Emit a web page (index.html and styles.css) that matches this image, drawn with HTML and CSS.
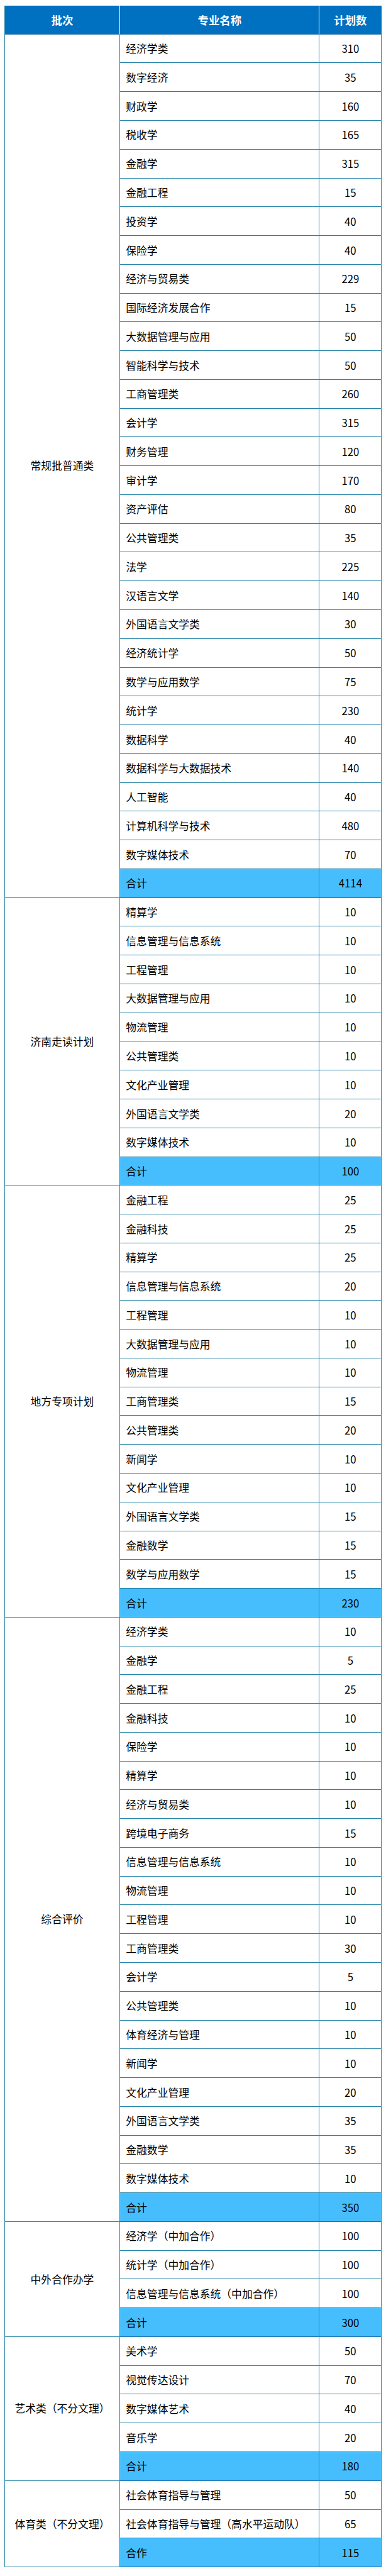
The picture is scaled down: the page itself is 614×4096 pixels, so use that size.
FILE: index.html
```html
<!DOCTYPE html>
<html lang="zh-CN">
<head>
<meta charset="utf-8">
<title>招生计划</title>
<link rel="stylesheet" href="styles.css">
</head>
<body>
<div class="plan">
  <div class="cell head">批次</div>
  <div class="cell head">专业名称</div>
  <div class="cell head last">计划数</div>

  <div class="cell batch rows-30">常规批普通类</div>
  <div class="cell name">经济学类</div><div class="cell num">310</div>
  <div class="cell name">数字经济</div><div class="cell num">35</div>
  <div class="cell name">财政学</div><div class="cell num">160</div>
  <div class="cell name">税收学</div><div class="cell num">165</div>
  <div class="cell name">金融学</div><div class="cell num">315</div>
  <div class="cell name">金融工程</div><div class="cell num">15</div>
  <div class="cell name">投资学</div><div class="cell num">40</div>
  <div class="cell name">保险学</div><div class="cell num">40</div>
  <div class="cell name">经济与贸易类</div><div class="cell num">229</div>
  <div class="cell name">国际经济发展合作</div><div class="cell num">15</div>
  <div class="cell name">大数据管理与应用</div><div class="cell num">50</div>
  <div class="cell name">智能科学与技术</div><div class="cell num">50</div>
  <div class="cell name">工商管理类</div><div class="cell num">260</div>
  <div class="cell name">会计学</div><div class="cell num">315</div>
  <div class="cell name">财务管理</div><div class="cell num">120</div>
  <div class="cell name">审计学</div><div class="cell num">170</div>
  <div class="cell name">资产评估</div><div class="cell num">80</div>
  <div class="cell name">公共管理类</div><div class="cell num">35</div>
  <div class="cell name">法学</div><div class="cell num">225</div>
  <div class="cell name">汉语言文学</div><div class="cell num">140</div>
  <div class="cell name">外国语言文学类</div><div class="cell num">30</div>
  <div class="cell name">经济统计学</div><div class="cell num">50</div>
  <div class="cell name">数学与应用数学</div><div class="cell num">75</div>
  <div class="cell name">统计学</div><div class="cell num">230</div>
  <div class="cell name">数据科学</div><div class="cell num">40</div>
  <div class="cell name">数据科学与大数据技术</div><div class="cell num">140</div>
  <div class="cell name">人工智能</div><div class="cell num">40</div>
  <div class="cell name">计算机科学与技术</div><div class="cell num">480</div>
  <div class="cell name">数字媒体技术</div><div class="cell num">70</div>
  <div class="cell name total">合计</div><div class="cell num total">4114</div>

  <div class="cell batch rows-10">济南走读计划</div>
  <div class="cell name">精算学</div><div class="cell num">10</div>
  <div class="cell name">信息管理与信息系统</div><div class="cell num">10</div>
  <div class="cell name">工程管理</div><div class="cell num">10</div>
  <div class="cell name">大数据管理与应用</div><div class="cell num">10</div>
  <div class="cell name">物流管理</div><div class="cell num">10</div>
  <div class="cell name">公共管理类</div><div class="cell num">10</div>
  <div class="cell name">文化产业管理</div><div class="cell num">10</div>
  <div class="cell name">外国语言文学类</div><div class="cell num">20</div>
  <div class="cell name">数字媒体技术</div><div class="cell num">10</div>
  <div class="cell name total">合计</div><div class="cell num total">100</div>

  <div class="cell batch rows-15">地方专项计划</div>
  <div class="cell name">金融工程</div><div class="cell num">25</div>
  <div class="cell name">金融科技</div><div class="cell num">25</div>
  <div class="cell name">精算学</div><div class="cell num">25</div>
  <div class="cell name">信息管理与信息系统</div><div class="cell num">20</div>
  <div class="cell name">工程管理</div><div class="cell num">10</div>
  <div class="cell name">大数据管理与应用</div><div class="cell num">10</div>
  <div class="cell name">物流管理</div><div class="cell num">10</div>
  <div class="cell name">工商管理类</div><div class="cell num">15</div>
  <div class="cell name">公共管理类</div><div class="cell num">20</div>
  <div class="cell name">新闻学</div><div class="cell num">10</div>
  <div class="cell name">文化产业管理</div><div class="cell num">10</div>
  <div class="cell name">外国语言文学类</div><div class="cell num">15</div>
  <div class="cell name">金融数学</div><div class="cell num">15</div>
  <div class="cell name">数学与应用数学</div><div class="cell num">15</div>
  <div class="cell name total">合计</div><div class="cell num total">230</div>

  <div class="cell batch rows-21">综合评价</div>
  <div class="cell name">经济学类</div><div class="cell num">10</div>
  <div class="cell name">金融学</div><div class="cell num">5</div>
  <div class="cell name">金融工程</div><div class="cell num">25</div>
  <div class="cell name">金融科技</div><div class="cell num">10</div>
  <div class="cell name">保险学</div><div class="cell num">10</div>
  <div class="cell name">精算学</div><div class="cell num">10</div>
  <div class="cell name">经济与贸易类</div><div class="cell num">10</div>
  <div class="cell name">跨境电子商务</div><div class="cell num">15</div>
  <div class="cell name">信息管理与信息系统</div><div class="cell num">10</div>
  <div class="cell name">物流管理</div><div class="cell num">10</div>
  <div class="cell name">工程管理</div><div class="cell num">10</div>
  <div class="cell name">工商管理类</div><div class="cell num">30</div>
  <div class="cell name">会计学</div><div class="cell num">5</div>
  <div class="cell name">公共管理类</div><div class="cell num">10</div>
  <div class="cell name">体育经济与管理</div><div class="cell num">10</div>
  <div class="cell name">新闻学</div><div class="cell num">10</div>
  <div class="cell name">文化产业管理</div><div class="cell num">20</div>
  <div class="cell name">外国语言文学类</div><div class="cell num">35</div>
  <div class="cell name">金融数学</div><div class="cell num">35</div>
  <div class="cell name">数字媒体技术</div><div class="cell num">10</div>
  <div class="cell name total">合计</div><div class="cell num total">350</div>

  <div class="cell batch rows-4">中外合作办学</div>
  <div class="cell name">经济学（中加合作）</div><div class="cell num">100</div>
  <div class="cell name">统计学（中加合作）</div><div class="cell num">100</div>
  <div class="cell name">信息管理与信息系统（中加合作）</div><div class="cell num">100</div>
  <div class="cell name total">合计</div><div class="cell num total">300</div>

  <div class="cell batch rows-5">艺术类（不分文理）</div>
  <div class="cell name">美术学</div><div class="cell num">50</div>
  <div class="cell name">视觉传达设计</div><div class="cell num">70</div>
  <div class="cell name">数字媒体艺术</div><div class="cell num">40</div>
  <div class="cell name">音乐学</div><div class="cell num">20</div>
  <div class="cell name total">合计</div><div class="cell num total">180</div>

  <div class="cell batch rows-3">体育类（不分文理）</div>
  <div class="cell name">社会体育指导与管理</div><div class="cell num">50</div>
  <div class="cell name">社会体育指导与管理（高水平运动队）</div><div class="cell num">65</div>
  <div class="cell name total">合作</div><div class="cell num total">115</div>
</div>
</body>
</html>
```

FILE: styles.css
```css
html, body {
  margin: 0;
  padding: 0;
  background: #ffffff;
}

body {
  font-family: "Noto Sans CJK SC", "Noto Sans", sans-serif;
  color: #000000;
}

.plan {
  display: grid;
  grid-template-columns: 183.7px 317.1px 99px;
  grid-template-rows: 45.7px repeat(88, 45.78px);
  margin: 9px 0 0 6.6px;
  width: 600.8px;
  box-sizing: border-box;
  border-left: 1px solid #2383a8;
}

.cell {
  box-sizing: border-box;
  border-right: 1px solid #2383a8;
  border-bottom: 1px solid #2383a8;
  display: flex;
  align-items: center;
  font-size: 16.8px;
  line-height: 1;
  white-space: nowrap;
  overflow: hidden;
}

.head {
  background: #0070c0;
  color: #ffffff;
  font-weight: 700;
  font-size: 17.4px;
  justify-content: center;
  border-right-color: #ffffff;
  border-bottom-color: #1f6fa8;
}

.head.last {
  border-right-color: #0070c0;
}

.batch {
  grid-column: 1;
  justify-content: center;
  background: #ffffff;
}

.rows-3 { grid-row: span 3; }
.rows-4 { grid-row: span 4; }
.rows-5 { grid-row: span 5; }
.rows-10 { grid-row: span 10; }
.rows-15 { grid-row: span 15; }
.rows-21 { grid-row: span 21; }
.rows-30 { grid-row: span 30; }

.name {
  grid-column: 2;
  padding-left: 9px;
  padding-top: 1px;
}

.num {
  grid-column: 3;
  justify-content: center;
  padding-top: 1px;
}

.total {
  background: #46befe;
  border-bottom-color: #1f6fa8;
}
```
